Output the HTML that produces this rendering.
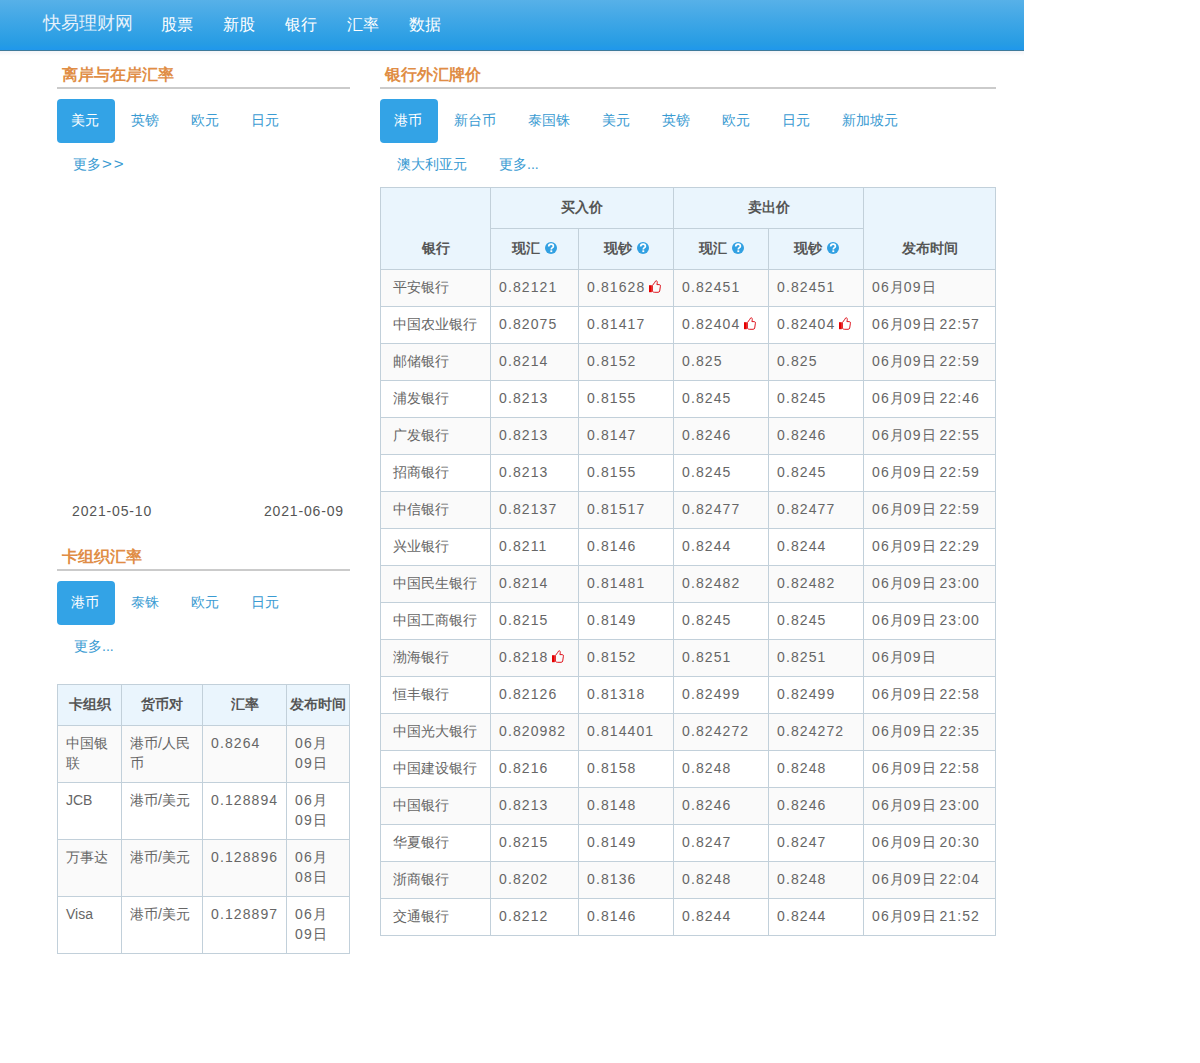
<!DOCTYPE html>
<html><head><meta charset="utf-8">
<style>
*{box-sizing:border-box;margin:0;padding:0}
html,body{width:1200px;height:1063px;overflow:hidden;background:#fff}
body{font-family:"Liberation Sans",sans-serif;font-size:14px;line-height:20px;color:#666;position:relative}
.hdr{position:absolute;left:0;top:0;width:1024px;height:51px;background:linear-gradient(#57b1e8 0%,#40a7e6 40%,#269ce4 88%,#1f97ec 100%);border-bottom:1px solid #3e7a9a}
.logo{position:absolute;left:43px;top:12px;font-size:18px;line-height:22px;color:#e4f1fb;white-space:nowrap}
.nav{position:absolute;top:14px;font-size:16px;line-height:22px;color:#fff;white-space:nowrap}
.ttl{position:absolute;height:27px;border-bottom:2px solid #cbcbcb;font-size:16px;line-height:20px;font-weight:bold;color:#e08d45;padding-left:5px;padding-top:3px;white-space:nowrap}
.tabs{position:absolute;list-style:none}
.tabs li{float:left;height:44px;line-height:42px;padding:0 16px 2px 14px;margin-right:2px;color:#3a9bd2;border-radius:4px;white-space:nowrap}
.tabs li.on{background:#33a3e6;color:#fff}
table{position:absolute;border-collapse:separate;border-spacing:0;table-layout:fixed;border-left:1px solid #c2d0da;border-top:1px solid #c2d0da}
td,th{border-right:1px solid #c2d0da;border-bottom:1px solid #c2d0da;padding:7px 8px 9px;line-height:20px;text-align:left;vertical-align:top;font-weight:normal}
th{background:#eaf5fd;color:#555;font-weight:bold;text-align:center;vertical-align:bottom;padding:9px 2px 11px}
tr.s td{background:#fafafa}
.q{display:inline-block;width:12px;height:12px;vertical-align:-1px;margin-left:5px}
.up{display:inline-block;width:12px;height:13px;vertical-align:-1px;margin-left:4px}
.date{position:absolute;top:501px;font-size:14px;color:#555;white-space:nowrap;letter-spacing:0.85px}
.n{letter-spacing:1.1px}
.gt{display:inline-block;transform:scaleX(1.2);transform-origin:0 0;letter-spacing:1.65px;margin-left:1.3px}
#bank td{white-space:nowrap}
#bank td:first-child{padding-left:12px}
</style></head><body>
<svg width="0" height="0" style="position:absolute"><defs><symbol id="thumb" viewBox="0 0 12 13"><rect x="0" y="5.2" width="2.8" height="7" fill="#e60000"/><path d="M3.4 5.6 L5.9 2.2 Q6.4 0.7 7.4 0.8 Q8.5 1.1 8.3 2.6 L7.9 4.6 L10.4 4.6 Q11.6 4.8 11.4 6.2 L10.7 11 Q10.4 12.3 9.1 12.3 L5.6 12.3 Q4.4 12.3 3.4 11.4 Z" fill="none" stroke="#dc0a14" stroke-width="0.95"/></symbol><symbol id="qm" viewBox="0 0 12 12"><circle cx="6" cy="6" r="6" fill="#31a0e2"/><path d="M3.7 4.5 Q3.7 2.1 6.1 2.1 Q8.4 2.1 8.4 4.2 Q8.4 5.2 7.3 5.8 Q6.3 6.3 6.3 7.4" stroke="#fff" stroke-width="1.7" fill="none"/><rect x="5.35" y="8.3" width="1.9" height="1.8" fill="#fff"/></symbol></defs></svg>
<div style="position:absolute;left:0;top:51px;width:1024px;height:5px;background:linear-gradient(#f3f4f8,#fff)"></div>
<div class="hdr">
<div class="logo">快易理财网</div>
<div class="nav" style="left:161px">股票</div>
<div class="nav" style="left:223px">新股</div>
<div class="nav" style="left:285px">银行</div>
<div class="nav" style="left:347px">汇率</div>
<div class="nav" style="left:409px">数据</div>
</div>

<div class="ttl" style="left:57px;top:62px;width:293px">离岸与在岸汇率</div>
<ul class="tabs" style="left:57px;top:99px;width:293px">
<li class="on">美元</li><li>英镑</li><li>欧元</li><li>日元</li><li style="padding-left:16px">更多<span class="gt">&gt;&gt;</span></li>
</ul>
<div class="date" style="left:72px">2021-05-10</div>
<div class="date" style="right:856px">2021-06-09</div>

<div class="ttl" style="left:57px;top:544px;width:293px">卡组织汇率</div>
<ul class="tabs" style="left:57px;top:581px;width:293px">
<li class="on">港币</li><li>泰铢</li><li>欧元</li><li>日元</li><li style="padding-left:17px">更多...</li>
</ul>

<table id="card" style="left:57px;top:684px;width:293px">
<colgroup><col style="width:64px"><col style="width:81px"><col style="width:84px"><col style="width:63px"></colgroup>
<tr><th>卡组织</th><th>货币对</th><th>汇率</th><th>发布时间</th></tr>
<tr class="s"><td>中国银联</td><td>港币/人民币</td><td><span class="n">0.8264</span></td><td><span class="n">06</span>月<br><span class="n">09</span>日</td></tr>
<tr><td>JCB</td><td>港币/美元</td><td><span class="n">0.128894</span></td><td><span class="n">06</span>月<br><span class="n">09</span>日</td></tr>
<tr class="s"><td>万事达</td><td>港币/美元</td><td><span class="n">0.128896</span></td><td><span class="n">06</span>月<br><span class="n">08</span>日</td></tr>
<tr><td>Visa</td><td>港币/美元</td><td><span class="n">0.128897</span></td><td><span class="n">06</span>月<br><span class="n">09</span>日</td></tr>
</table>

<div class="ttl" style="left:380px;top:62px;width:616px">银行外汇牌价</div>
<ul class="tabs" style="left:380px;top:99px;width:616px">
<li class="on">港币</li><li>新台币</li><li>泰国铢</li><li>美元</li><li>英镑</li><li>欧元</li><li>日元</li><li>新加坡元</li><li style="margin-left:3px">澳大利亚元</li><li>更多...</li>
</ul>

<table id="bank" style="left:380px;top:187px;width:616px">
<colgroup><col style="width:110px"><col style="width:88px"><col style="width:95px"><col style="width:95px"><col style="width:95px"><col style="width:132px"></colgroup>
<tr><th rowspan="2">银行</th><th colspan="2">买入价</th><th colspan="2">卖出价</th><th rowspan="2">发布时间</th></tr>
<tr><th>现汇<svg class="q" viewBox="0 0 12 12"><use href="#qm"/></svg></th><th>现钞<svg class="q" viewBox="0 0 12 12"><use href="#qm"/></svg></th><th>现汇<svg class="q" viewBox="0 0 12 12"><use href="#qm"/></svg></th><th>现钞<svg class="q" viewBox="0 0 12 12"><use href="#qm"/></svg></th></tr>
<tr class="s"><td>平安银行</td><td><span class="n">0.82121</span></td><td><span class="n">0.81628</span><svg class="up" viewBox="0 0 12 13"><use href="#thumb"/></svg></td><td><span class="n">0.82451</span></td><td><span class="n">0.82451</span></td><td><span class="n">06</span>月<span class="n">09</span>日</td></tr>
<tr><td>中国农业银行</td><td><span class="n">0.82075</span></td><td><span class="n">0.81417</span></td><td><span class="n">0.82404</span><svg class="up" viewBox="0 0 12 13"><use href="#thumb"/></svg></td><td><span class="n">0.82404</span><svg class="up" viewBox="0 0 12 13"><use href="#thumb"/></svg></td><td><span class="n">06</span>月<span class="n">09</span>日 <span class="n">22:57</span></td></tr>
<tr class="s"><td>邮储银行</td><td><span class="n">0.8214</span></td><td><span class="n">0.8152</span></td><td><span class="n">0.825</span></td><td><span class="n">0.825</span></td><td><span class="n">06</span>月<span class="n">09</span>日 <span class="n">22:59</span></td></tr>
<tr><td>浦发银行</td><td><span class="n">0.8213</span></td><td><span class="n">0.8155</span></td><td><span class="n">0.8245</span></td><td><span class="n">0.8245</span></td><td><span class="n">06</span>月<span class="n">09</span>日 <span class="n">22:46</span></td></tr>
<tr class="s"><td>广发银行</td><td><span class="n">0.8213</span></td><td><span class="n">0.8147</span></td><td><span class="n">0.8246</span></td><td><span class="n">0.8246</span></td><td><span class="n">06</span>月<span class="n">09</span>日 <span class="n">22:55</span></td></tr>
<tr><td>招商银行</td><td><span class="n">0.8213</span></td><td><span class="n">0.8155</span></td><td><span class="n">0.8245</span></td><td><span class="n">0.8245</span></td><td><span class="n">06</span>月<span class="n">09</span>日 <span class="n">22:59</span></td></tr>
<tr class="s"><td>中信银行</td><td><span class="n">0.82137</span></td><td><span class="n">0.81517</span></td><td><span class="n">0.82477</span></td><td><span class="n">0.82477</span></td><td><span class="n">06</span>月<span class="n">09</span>日 <span class="n">22:59</span></td></tr>
<tr><td>兴业银行</td><td><span class="n">0.8211</span></td><td><span class="n">0.8146</span></td><td><span class="n">0.8244</span></td><td><span class="n">0.8244</span></td><td><span class="n">06</span>月<span class="n">09</span>日 <span class="n">22:29</span></td></tr>
<tr class="s"><td>中国民生银行</td><td><span class="n">0.8214</span></td><td><span class="n">0.81481</span></td><td><span class="n">0.82482</span></td><td><span class="n">0.82482</span></td><td><span class="n">06</span>月<span class="n">09</span>日 <span class="n">23:00</span></td></tr>
<tr><td>中国工商银行</td><td><span class="n">0.8215</span></td><td><span class="n">0.8149</span></td><td><span class="n">0.8245</span></td><td><span class="n">0.8245</span></td><td><span class="n">06</span>月<span class="n">09</span>日 <span class="n">23:00</span></td></tr>
<tr class="s"><td>渤海银行</td><td><span class="n">0.8218</span><svg class="up" viewBox="0 0 12 13"><use href="#thumb"/></svg></td><td><span class="n">0.8152</span></td><td><span class="n">0.8251</span></td><td><span class="n">0.8251</span></td><td><span class="n">06</span>月<span class="n">09</span>日</td></tr>
<tr><td>恒丰银行</td><td><span class="n">0.82126</span></td><td><span class="n">0.81318</span></td><td><span class="n">0.82499</span></td><td><span class="n">0.82499</span></td><td><span class="n">06</span>月<span class="n">09</span>日 <span class="n">22:58</span></td></tr>
<tr class="s"><td>中国光大银行</td><td><span class="n">0.820982</span></td><td><span class="n">0.814401</span></td><td><span class="n">0.824272</span></td><td><span class="n">0.824272</span></td><td><span class="n">06</span>月<span class="n">09</span>日 <span class="n">22:35</span></td></tr>
<tr><td>中国建设银行</td><td><span class="n">0.8216</span></td><td><span class="n">0.8158</span></td><td><span class="n">0.8248</span></td><td><span class="n">0.8248</span></td><td><span class="n">06</span>月<span class="n">09</span>日 <span class="n">22:58</span></td></tr>
<tr class="s"><td>中国银行</td><td><span class="n">0.8213</span></td><td><span class="n">0.8148</span></td><td><span class="n">0.8246</span></td><td><span class="n">0.8246</span></td><td><span class="n">06</span>月<span class="n">09</span>日 <span class="n">23:00</span></td></tr>
<tr><td>华夏银行</td><td><span class="n">0.8215</span></td><td><span class="n">0.8149</span></td><td><span class="n">0.8247</span></td><td><span class="n">0.8247</span></td><td><span class="n">06</span>月<span class="n">09</span>日 <span class="n">20:30</span></td></tr>
<tr class="s"><td>浙商银行</td><td><span class="n">0.8202</span></td><td><span class="n">0.8136</span></td><td><span class="n">0.8248</span></td><td><span class="n">0.8248</span></td><td><span class="n">06</span>月<span class="n">09</span>日 <span class="n">22:04</span></td></tr>
<tr><td>交通银行</td><td><span class="n">0.8212</span></td><td><span class="n">0.8146</span></td><td><span class="n">0.8244</span></td><td><span class="n">0.8244</span></td><td><span class="n">06</span>月<span class="n">09</span>日 <span class="n">21:52</span></td></tr>
</table>
</body></html>
